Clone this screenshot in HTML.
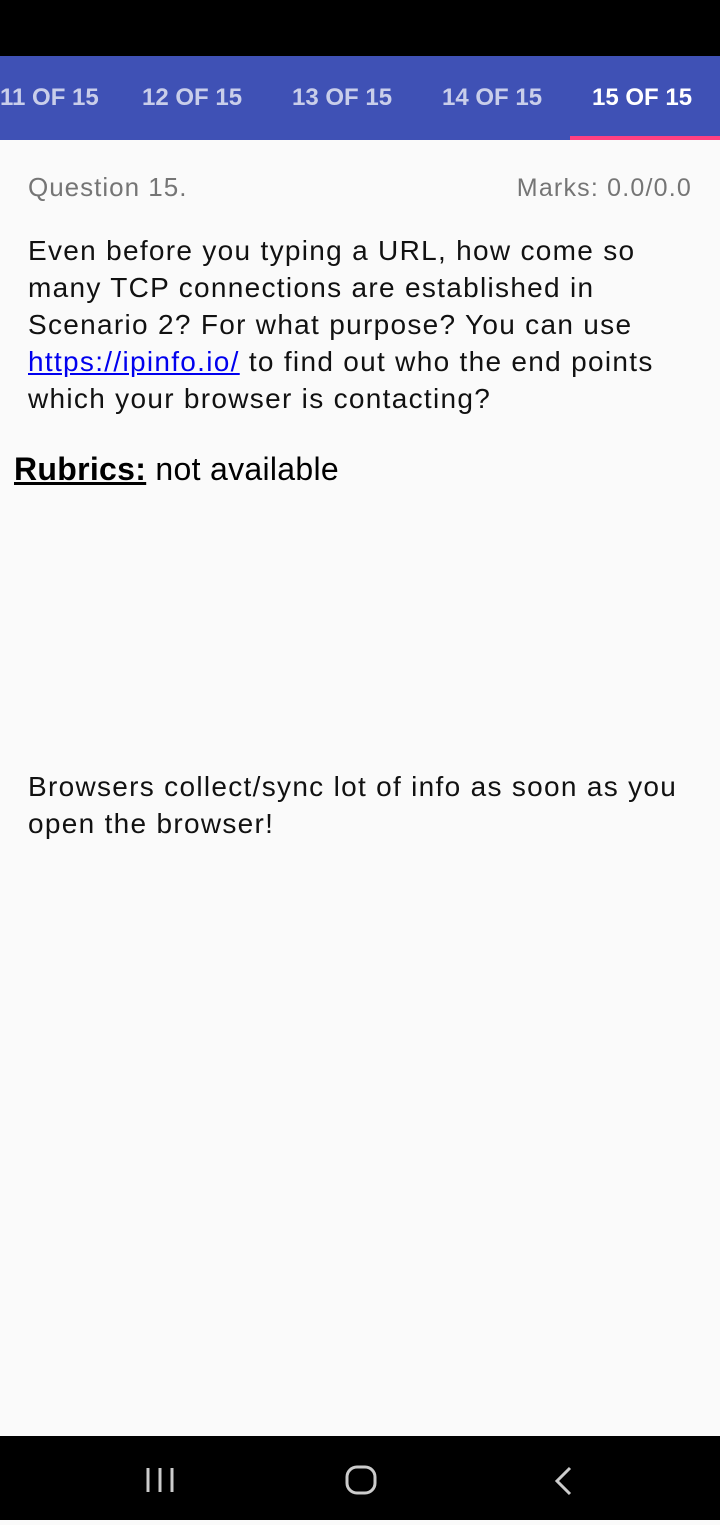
<!DOCTYPE html>
<html><head><meta charset="utf-8"><style>
body{margin:0;width:720px;height:1520px;background:#fafafa;font-family:"Liberation Sans",sans-serif;position:relative;overflow:hidden}
.top{position:absolute;top:0;left:0;width:720px;height:56px;background:#000}
.tabs{position:absolute;top:56px;left:0;width:720px;height:84px;background:#3f51b5}
.tab{position:absolute;top:28px;font-size:24px;font-weight:bold;color:rgba(255,255,255,0.72)}
.ind{position:absolute;left:570px;top:136px;width:150px;height:4px;background:#ff4081}
.q{position:absolute;left:28px;top:172px;font-size:26px;color:#757575;letter-spacing:1px}
.m{position:absolute;right:28px;top:174px;font-size:25px;color:#757575;letter-spacing:1.2px}
.body{position:absolute;left:28px;top:232px;font-size:28px;line-height:37px;color:#111;white-space:nowrap;letter-spacing:1.3px}
a{color:#0000ee}
.rub{position:absolute;left:14px;top:451px;font-size:32px;color:#000;letter-spacing:0.3px}
.ans{position:absolute;left:28px;top:768px;font-size:28px;line-height:37px;color:#111;white-space:nowrap;letter-spacing:1.3px}
.nav{position:absolute;top:1436px;left:0;width:720px;height:84px;background:#000}
</style></head><body>
<div class="top"></div>
<div class="tabs">
<div class="tab" style="left:0">11 OF 15</div>
<div class="tab" style="left:142px">12 OF 15</div>
<div class="tab" style="left:292px">13 OF 15</div>
<div class="tab" style="left:442px">14 OF 15</div>
<div class="tab" style="left:592px;color:#fff">15 OF 15</div>
</div>
<div class="ind"></div>
<div class="q">Question 15.</div>
<div class="m">Marks: 0.0/0.0</div>
<div class="body">Even before you typing a URL, how come so<br>many TCP connections are established in<br>Scenario 2? For what purpose? You can use<br><a href="#">https://ipinfo.io/</a> to find out who the end points<br>which your browser is contacting?</div>
<div class="rub"><b><u>Rubrics:</u></b> not available</div>
<div class="ans">Browsers collect/sync lot of info as soon as you<br>open the browser!</div>
<div class="nav">
<svg width="720" height="84">
<g stroke="#ccc" stroke-width="3" fill="none">
<line x1="148" y1="32" x2="148" y2="56"/><line x1="160" y1="32" x2="160" y2="56"/><line x1="172" y1="32" x2="172" y2="56"/>
<rect x="347" y="31" width="28" height="26" rx="10"/>
<polyline points="570,32 557,45 570,58"/>
</g></svg>
</div>
</body></html>
